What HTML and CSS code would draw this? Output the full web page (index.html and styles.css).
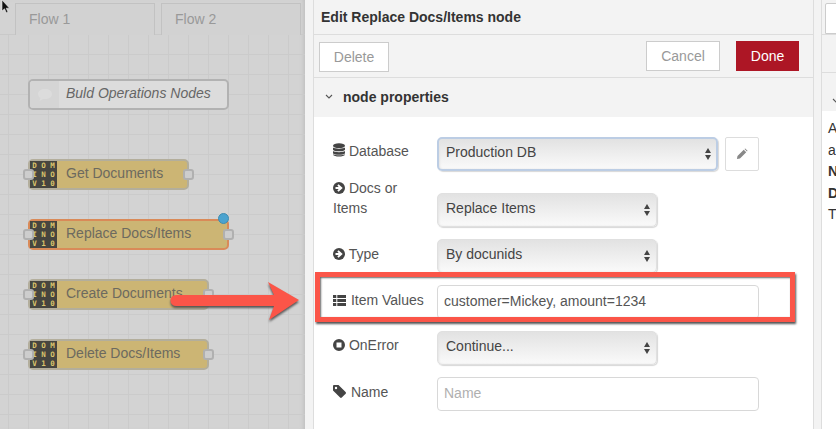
FILE: index.html
```html
<!DOCTYPE html>
<html lang="en">
<head>
    <meta charset="UTF-8">
    <meta name="viewport" content="width=device-width, initial-scale=1.0">
    <title>Edit Replace Docs/Items node</title>
    <link rel="stylesheet" href="styles.css">
</head>
<body>
    <div class="app">
        <div class="editor">
            <div class="tabs">
                <div class="tab">Flow 1</div>
                <div class="tab">Flow 2</div>
            </div>
            <div class="canvas">
                <div class="comment">
                    <div class="comment-icon">
                        <svg width="16" height="14" viewBox="0 0 16 14"><path d="M8 1C4 1 1 3 1 6c0 1.700 1 3 2.500 4L2.500 13l3.500-2h2c4 0 7-2 7-5s-3-5-7-5z" fill="#dcdcdc"/></svg>
                    </div>
                    <span>Buld Operations Nodes</span>
                </div>

                <div class="node node-get">
                    <div class="port port-in"></div>
                    <div class="logo"><span>D</span><span>O</span><span>M</span><span>I</span><span>N</span><span>O</span><span>V</span><span>1</span><span>0</span></div>
                    <span>Get Documents</span>
                    <div class="port port-out"></div>
                </div>
                <div class="node node-replace">
                    <div class="port port-in"></div>
                    <div class="logo"><span>D</span><span>O</span><span>M</span><span>I</span><span>N</span><span>O</span><span>V</span><span>1</span><span>0</span></div>
                    <span>Replace Docs/Items</span>
                    <div class="port port-out"></div>
                    <div class="changed"></div>
                </div>
                <div class="node node-create">
                    <div class="port port-in"></div>
                    <div class="logo"><span>D</span><span>O</span><span>M</span><span>I</span><span>N</span><span>O</span><span>V</span><span>1</span><span>0</span></div>
                    <span>Create Documents</span>
                    <div class="port port-out"></div>
                </div>
                <div class="node node-delete">
                    <div class="port port-in"></div>
                    <div class="logo"><span>D</span><span>O</span><span>M</span><span>I</span><span>N</span><span>O</span><span>V</span><span>1</span><span>0</span></div>
                    <span>Delete Docs/Items</span>
                    <div class="port port-out"></div>
                </div>
            </div>
        </div>

        <div class="tray">
            <div class="tray-title">Edit Replace Docs/Items node</div>
            <div class="tray-toolbar">
                <button class="btn btn-delete">Delete</button>
                <div class="toolbar-right">
                    <button class="btn btn-cancel">Cancel</button>
                    <button class="btn btn-done">Done</button>
                </div>
            </div>
            <div class="section-head">
                <svg class="chevron" width="8" height="5" viewBox="0 0 8 5"><path d="M1 1l3 3 3-3" fill="none" stroke="#555" stroke-width="1.100"/></svg>
                node properties
            </div>
            <div class="form">
                <div class="row row-first">
                    <label class="label">
                        <svg class="icon" width="12" height="14" viewBox="0 0 12 14"><ellipse cx="6" cy="2.700" rx="6" ry="2.400" fill="#444"/><path d="M0 4.500c1.500 1.500 10.500 1.500 12 0v2.200c-1 2-11 2-12 0zM0 8c1.500 1.500 10.500 1.500 12 0v2.200c-1 2-11 2-12 0zM0 11.300c1.500 1.400 10.500 1.400 12 0v.5c-1 2.400-11 2.400-12 0z" fill="#444"/></svg>
                        Database
                    </label>
                    <div class="select-wrap select-wide select-focus"><select><option>Production DB</option></select></div>
                    <button class="btn-edit">
                        <svg width="12" height="12" viewBox="0 0 13 13"><path d="M1 12l.6-3.300L8.400 1.900l2.700 2.700-6.800 6.800zM9.200 1.100l.8-.6 2.500 2.500-.6.8z" fill="#888"/></svg>
                    </button>
                </div>
                <div class="row row-tall">
                    <label class="label">
                        <svg class="icon" width="12" height="12" viewBox="0 0 12 12"><circle cx="6" cy="6" r="6" fill="#444"/><path d="M2.500 5h3.200L4.300 3.400l1.300-1.100L9.700 6 5.600 9.700 4.300 8.600 5.700 7H2.500z" fill="#fff"/></svg>
                        Docs or Items
                    </label>
                    <div class="select-wrap"><select><option>Replace Items</option></select></div>
                </div>
                <div class="row">
                    <label class="label">
                        <svg class="icon" width="12" height="12" viewBox="0 0 12 12"><circle cx="6" cy="6" r="6" fill="#444"/><path d="M2.500 5h3.200L4.300 3.400l1.300-1.100L9.700 6 5.600 9.700 4.300 8.600 5.700 7H2.500z" fill="#fff"/></svg>
                        Type
                    </label>
                    <div class="select-wrap"><select><option>By docunids</option></select></div>
                </div>
                <div class="row">
                    <label class="label">
                        <svg class="icon icon-wide" width="13" height="11" viewBox="0 0 13 11"><path d="M0 0h3.300v3H0zM4.300 0H13v3H4.300zM0 4h3.300v3H0zM4.300 4H13v3H4.300zM0 8h3.300v3H0zM4.300 8H13v3H4.300z" fill="#444"/></svg>
                        Item Values
                    </label>
                    <input class="text-input" type="text" value="customer=Mickey, amount=1234">
                </div>
                <div class="row row-onerror">
                    <label class="label">
                        <svg class="icon" width="12" height="12" viewBox="0 0 12 12"><path fill-rule="evenodd" d="M6 0a6 6 0 1 1 0 12A6 6 0 0 1 6 0zM3.500 3.500v5h5v-5z" fill="#444"/></svg>
                        OnError
                    </label>
                    <div class="select-wrap"><select><option>Continue...</option></select></div>
                </div>
                <div class="row">
                    <label class="label">
                        <svg class="icon icon-wide" width="13" height="13" viewBox="0 0 13 13"><path fill-rule="evenodd" d="M0 1.200C0 .5.500 0 1.200 0h4.300l7.100 7.100c.5.500.5 1.200 0 1.700l-3.800 3.800c-.5.500-1.200.5-1.700 0L0 5.500zM3 1.800a1.200 1.200 0 1 0 0 2.400 1.200 1.200 0 0 0 0-2.400z" fill="#444"/></svg>
                        Name
                    </label>
                    <input class="text-input" type="text" placeholder="Name">
                </div>
            </div>
        </div>

        <div class="gutter"></div>

        <div class="sidebar">
            <div class="side-tabs"><div class="side-tab"></div></div>
            <div class="side-toolbar"></div>
            <div class="side-head">
                <svg width="8" height="5" viewBox="0 0 8 5"><path d="M1 1l3 3 3-3" fill="none" stroke="#555" stroke-width="1.100"/></svg>
            </div>
            <div class="side-text">
                <div>A</div>
                <div>a</div>
                <div><b>N</b></div>
                <div><b>D</b></div>
                <div>T</div>
            </div>
        </div>

        <!-- annotations on top of the screenshot -->
        <div class="highlight"></div>
        <svg class="arrow" width="140" height="50" viewBox="0 0 140 50">
            <path d="M6 15h98l-6-13 31 18-30 20 5-14H6a5.500 5.500 0 0 1 0-11z" fill="#fb5548"/>
        </svg>
        <svg class="cursor" width="11" height="14" viewBox="0 0 11 14"><path d="M2 0v11l2.500-2.200 1.800 4 1.700-.8-1.800-3.800H9.500z" fill="#111" stroke="#eee" stroke-width=".6"/></svg>
    </div>
</body>
</html>
```

FILE: styles.css
```css
* {
    box-sizing: border-box;
}
body {
    margin: 0;
    font-family: "Liberation Sans", Arial, sans-serif;
    font-size: 14px;
    color: #444;
    background-color: #fff;
    overflow: hidden;
}
.app {
    position: relative;
    display: flex;
    width: 836px;
    height: 429px;
    overflow: hidden;
}

/* flow editor, dimmed */
.editor {
    width: 305px;
    flex: none;
    background-color: #d3d3d3;
    box-shadow: inset -4px 0 4px -3px #bbb;
}
.tabs {
    display: flex;
    gap: 6px;
    height: 35px;
    padding: 3px 0 0 15px;
    border-bottom: 1px solid #c9c9c9;
}
.tab {
    width: 140px;
    height: 32px;
    padding: 7px 0 0 13px;
    border: 1px solid #c2c2c2;
    border-bottom: none;
    color: #999;
    background-color: #d2d2d2;
}
.canvas {
    position: relative;
    height: 394px;
    background-image:
        linear-gradient(to right, #cbcbcb 1px, transparent 1px),
        linear-gradient(to bottom, #cbcbcb 1px, transparent 1px);
    background-size: 20px 20px;
    background-position: 8px -1px;
}
.comment {
    position: absolute;
    left: 28px;
    top: 44px;
    display: flex;
    align-items: center;
    width: 201px;
    height: 31px;
    border: 2px solid #b2b2b2;
    border-radius: 5px;
    background-color: #dcdcdc;
    font-style: italic;
    color: #666;
    overflow: hidden;
}
.comment span {
    padding-bottom: 3px;
}
.comment-icon {
    display: flex;
    align-items: center;
    justify-content: center;
    width: 29px;
    height: 100%;
    margin-right: 7px;
    background-color: #d5d5d5;
}
.node {
    position: absolute;
    left: 28px;
    display: flex;
    align-items: center;
    height: 31px;
    border: 2px solid #b3ae9c;
    border-radius: 5px;
    background-color: #ccb574;
    color: #6d6a5f;
}
.node > span {
    padding-bottom: 3px;
}
.node-get {
    top: 124px;
    width: 161px;
}
.node-replace {
    top: 184px;
    width: 201px;
    border-color: #d98a58;
}
.node-create {
    top: 244px;
    width: 181px;
}
.node-delete {
    top: 304px;
    width: 181px;
}
.logo {
    display: grid;
    grid-template-columns: repeat(3, 1fr);
    grid-template-rows: repeat(3, 1fr);
    align-items: center;
    justify-items: center;
    flex: none;
    width: 27px;
    height: 27px;
    margin-right: 9px;
    background-color: #46453f;
    color: #dcc56c;
    font-family: "DejaVu Sans Mono", monospace;
    font-size: 7.500px;
    font-weight: bold;
    line-height: 9px;
}
.port {
    position: absolute;
    top: 8px;
    width: 11px;
    height: 11px;
    border: 2px solid #b0b0b0;
    border-radius: 3px;
    background-color: #cdcdcd;
}
.port-in {
    left: -7px;
}
.port-out {
    right: -7px;
}
.changed {
    position: absolute;
    top: -8px;
    right: -2px;
    width: 11px;
    height: 11px;
    border: 1px solid #3f8cb0;
    border-radius: 50%;
    background-color: #4ba3cf;
}

/* edit tray */
.tray {
    width: 508px;
    flex: none;
    padding-left: 8px;
    background-color: #f3f3f3;
}
.tray-title {
    height: 35px;
    padding: 9px 0 0 7px;
    border-left: 1px solid #ddd;
    border-bottom: 1px solid #ddd;
    font-weight: bold;
    color: #333;
}
.tray-toolbar {
    display: flex;
    justify-content: space-between;
    height: 43px;
    padding: 6px 14px 0 5px;
    border-left: 1px solid #ddd;
    border-bottom: 1px solid #ddd;
}
.toolbar-right {
    display: flex;
    gap: 16px;
}
.btn {
    height: 30px;
    border: 1px solid #ccc;
    background-color: #fff;
    color: #999;
    font-family: inherit;
    font-size: 14px;
    padding: 0;
}
.btn-delete {
    width: 70px;
    margin-top: 1px;
}
.btn-cancel {
    width: 74px;
}
.btn-done {
    width: 63px;
    border-color: #ad1625;
    background-color: #ad1625;
    color: #fff;
}
.section-head {
    display: flex;
    align-items: center;
    gap: 10px;
    height: 39px;
    padding: 0 0 2px 11px;
    border-left: 1px solid #ddd;
    font-weight: bold;
    color: #333;
}
.chevron {
    flex: none;
}
.form {
    height: 313px;
    padding: 20px 0 0 19px;
    border-left: 1px solid #ddd;
    background-color: #fff;
}
.row {
    display: flex;
    align-items: flex-start;
    margin-bottom: 12px;
}
.row-first {
    margin-bottom: 8px;
}
.row-first .label,
.row-onerror .label {
    padding-top: 4px;
}
.row-tall .label {
    padding-top: 0;
    margin-top: -1px;
}
.row-tall .select-wrap {
    margin-top: 14px;
}
.label {
    width: 104px;
    flex: none;
    padding: 5px 4px 0 0;
    line-height: 20px;
    color: #555;
}
.icon {
    vertical-align: -1px;
}
.icon-wide {
    margin-right: 1px;
}
.select-wrap {
    position: relative;
    width: 220px;
    height: 34px;
}
.select-wide {
    width: 281px;
}
.select-wrap::before,
.select-wrap::after {
    content: "";
    position: absolute;
    right: 7px;
    border-left: 3.500px solid transparent;
    border-right: 3.500px solid transparent;
}
.select-wrap::before {
    top: 11px;
    border-bottom: 5px solid #444;
}
.select-wrap::after {
    top: 18px;
    border-top: 5px solid #444;
}
select {
    appearance: none;
    display: block;
    width: 100%;
    height: 100%;
    padding: 0 0 4px 8px;
    border: 1px solid #e0e0e0;
    border-radius: 5px;
    background: linear-gradient(to bottom, #e2e2e2, #fafafa);
    box-shadow: inset 1px 0 2px #e4e4e4, 1px 1px 1px #d8d8d8;
    font-family: inherit;
    font-size: 14px;
    color: #444;
}
.select-focus select {
    border: 2px solid #bccde4;
    padding-left: 7px;
}
.btn-edit {
    display: flex;
    align-items: center;
    justify-content: center;
    width: 34px;
    height: 34px;
    margin-left: 7px;
    padding: 0;
    border: 1px solid #ddd;
    border-radius: 2px;
    background-color: #fff;
}
.text-input {
    width: 322px;
    height: 34px;
    padding: 0 6px 2px;
    border: 1px solid #d8d8d8;
    border-radius: 4px;
    font-family: inherit;
    font-size: 14px;
    color: #555;
}
.text-input::placeholder {
    color: #b0b0b0;
}

/* help sidebar, cut off by the screenshot */
.gutter {
    width: 9px;
    flex: none;
    border-left: 1px solid #ddd;
    border-right: 1px solid #ddd;
    background-color: #f3f3f3;
}
.sidebar {
    width: 14px;
    flex: none;
    overflow: hidden;
}
.side-tabs {
    height: 35px;
    padding: 3px 0 0 3px;
    border-bottom: 1px solid #ddd;
    background-color: #f3f3f3;
}
.side-tab {
    width: 40px;
    height: 31px;
    border: 1px solid #ccc;
    border-radius: 2px 0 0 0;
    background-color: #fff;
}
.side-toolbar {
    height: 38px;
    border-bottom: 1px solid #ddd;
    background-color: #f3f3f3;
}
.side-head {
    height: 38px;
    padding: 17px 0 0 10px;
    background-color: #f3f3f3;
}
.side-text {
    padding: 7px 0 0 6px;
    line-height: 21.500px;
    color: #333;
}

/* annotations */
.highlight {
    position: absolute;
    left: 315px;
    top: 272px;
    width: 480px;
    height: 50px;
    border: 5px solid #fb5548;
    box-shadow: 1px 2px 2px #555, inset 1px 1px 2px #666;
}
.arrow {
    position: absolute;
    left: 170px;
    top: 280px;
    filter: drop-shadow(0 2px 1px #555);
}
.cursor {
    position: absolute;
    left: 0;
    top: 0;
}
```
